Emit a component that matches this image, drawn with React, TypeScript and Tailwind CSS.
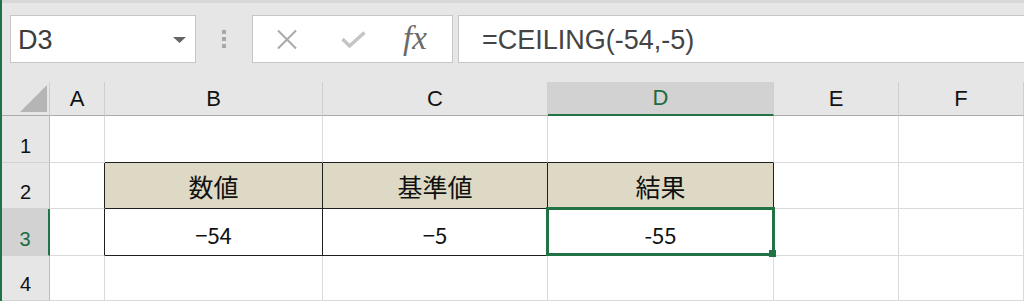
import React from 'react';

const ui = { fontFamily: '"Liberation Sans", Arial, sans-serif' };
const cellFont = { fontFamily: '"Noto Sans CJK JP", "Noto Sans", sans-serif' };

type CellProps = {
  bg?: string;
  right?: string;
  bottom?: string;
  extra?: string;
  children?: React.ReactNode;
};

const Cell = ({
  bg = 'bg-white',
  right = 'border-r-[#dadada]',
  bottom = 'border-b-[#dadada]',
  extra = '',
  children,
}: CellProps) => (
  <div
    className={`relative flex items-center justify-center border-r border-b text-[22px] text-[#111] ${bg} ${right} ${bottom} ${extra}`}
    style={cellFont}
  >
    {children}
  </div>
);

const ColHead = ({ label, active = false }: { label: string; active?: boolean }) => (
  <div
    className={`flex items-end justify-center border-r border-r-[#cfcfcf] pb-[3px] text-[22px] leading-[26px] ${
      active
        ? 'border-b-2 border-b-[#217346] bg-[#d2d2d2] text-[#1e6b40]'
        : 'border-b border-b-[#ababab] bg-[#e6e6e6] text-[#111]'
    }`}
    style={ui}
  >
    {label}
  </div>
);

const RowHead = ({ label, active = false }: { label: string; active?: boolean }) => (
  <div
    className={`flex items-end justify-center border-b border-b-[#d2d2d2] pb-[4px] text-[20px] leading-[24px] ${
      active
        ? 'border-r-2 border-r-[#217346] bg-[#d2d2d2] text-[#1e6b40]'
        : 'border-r border-r-[#bcbcbc] bg-[#e6e6e6] text-[#111]'
    }`}
    style={ui}
  >
    {label}
  </div>
);

const BLACK_R = 'border-r-[#1f1f1f]';
const BLACK_B = 'border-b-[#1f1f1f]';
const TAN = 'bg-[#ddd9c4]';

const App = () => {
  return (
    <div className="h-[301px] w-[1024px] overflow-hidden border-l-2 border-[#217346] bg-[#e6e6e6]">
      <div className="h-[3px] bg-[#d8d8d8]" />

      {/* formula bar */}
      <div className="flex h-[79px] items-start pt-[12px]" style={ui}>
        <div className="ml-[8px] flex h-[48px] w-[186px] items-center border border-[#c6c6c6] bg-white pl-[7px] pr-[9px] pt-[2px]">
          <span className="flex-1 text-[27px] text-[#3c3c3c]">D3</span>
          <svg width="13" height="6" viewBox="0 0 13 6">
            <polygon points="0,0 13,0 6.5,6" fill="#666" />
          </svg>
        </div>

        <div className="flex h-[48px] w-[56px] flex-col items-center justify-center gap-[3px] pr-[1px]">
          <span className="h-[4px] w-[4px] bg-[#a8a8a8]" />
          <span className="h-[4px] w-[4px] bg-[#a8a8a8]" />
          <span className="h-[4px] w-[4px] bg-[#a8a8a8]" />
        </div>

        <div className="flex h-[48px] w-[201px] items-center border border-[#c6c6c6] bg-white">
          <svg className="ml-[23px]" width="22" height="21" viewBox="0 0 22 21">
            <path d="M2 1.5 L20 19.5 M20 1.5 L2 19.5" stroke="#a9a9a9" strokeWidth="2" fill="none" />
          </svg>
          <svg className="ml-[43px]" width="25" height="17" viewBox="0 0 25 17">
            <path d="M1.5 8 L8.5 15 L23.5 1.5" stroke="#c4c4c4" strokeWidth="3.4" fill="none" />
          </svg>
          <span
            className="ml-[37px] pb-[2px] text-[33px] italic leading-none text-[#6a6a6a]"
            style={{ fontFamily: '"Liberation Serif", "Times New Roman", serif' }}
          >
            fx
          </span>
        </div>

        <div className="ml-[5px] flex h-[48px] flex-1 items-center border border-r-0 border-[#c6c6c6] bg-white pl-[23px] pt-[2px]">
          <span className="text-[27px] text-[#444]">=CEILING(-54,-5)</span>
        </div>
      </div>

      {/* sheet */}
      <div className="grid grid-cols-[48px_55px_218px_225px_226px_125px_1fr] grid-rows-[34px_47px_46px_47px_45px]">
        <div className="flex items-end justify-end border-r border-b border-r-[#cfcfcf] border-b-[#ababab] bg-[#e6e6e6] pb-[3px] pr-[2px]">
          <svg width="27" height="27" viewBox="0 0 27 27">
            <polygon points="27,0 27,27 0,27" fill="#b5b5b5" />
          </svg>
        </div>
        <ColHead label="A" />
        <ColHead label="B" />
        <ColHead label="C" />
        <ColHead label="D" active />
        <ColHead label="E" />
        <ColHead label="F" />

        <RowHead label="1" />
        <Cell />
        <Cell bottom={BLACK_B} />
        <Cell bottom={BLACK_B} />
        <Cell bottom={BLACK_B} />
        <Cell />
        <Cell />

        <RowHead label="2" />
        <Cell right={BLACK_R} />
        <Cell bg={TAN} right={BLACK_R} bottom={BLACK_B} extra="pt-[3px] text-[25px]">数値</Cell>
        <Cell bg={TAN} right={BLACK_R} bottom={BLACK_B} extra="pt-[3px] text-[25px]">基準値</Cell>
        <Cell bg={TAN} right={BLACK_R} bottom={BLACK_B} extra="pt-[3px] text-[25px]">結果</Cell>
        <Cell />
        <Cell />

        <RowHead label="3" active />
        <Cell right={BLACK_R} />
        <Cell right={BLACK_R} bottom={BLACK_B} extra="pt-[5px]">−54</Cell>
        <Cell right={BLACK_R} bottom={BLACK_B} extra="pt-[5px]">−5</Cell>
        <Cell right={BLACK_R} bottom={BLACK_B} extra="z-10 pt-[5px]">
          -55
          <div className="absolute -top-[2px] -left-[2px] -right-[2px] -bottom-[1px] border-[3px] border-[#217346]">
            <div className="absolute -right-[4px] -bottom-[4px] h-[7px] w-[7px] bg-[#217346]" />
          </div>
        </Cell>
        <Cell />
        <Cell />

        <RowHead label="4" />
        <Cell />
        <Cell />
        <Cell />
        <Cell />
        <Cell />
        <Cell />
      </div>
    </div>
  );
};

export default App;
